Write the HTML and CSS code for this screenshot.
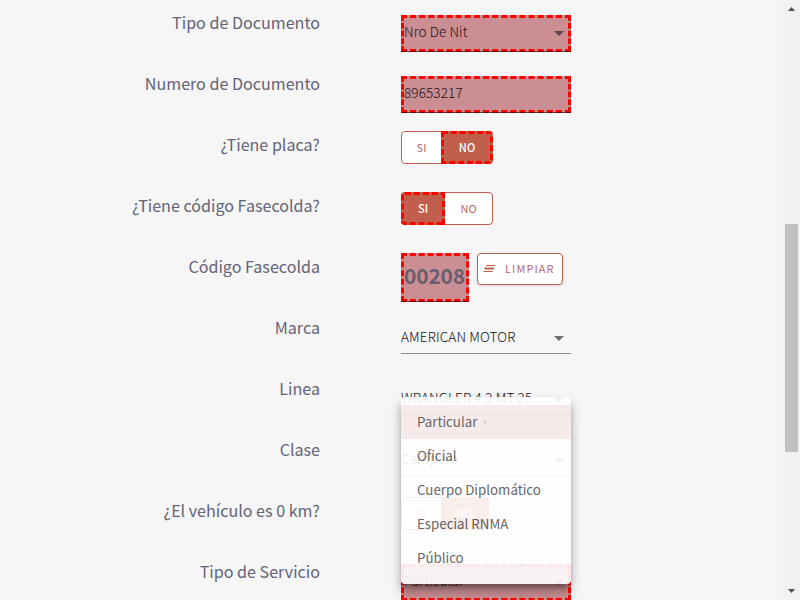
FILE: index.html
```html
<!DOCTYPE html>
<html lang="es">
<head>
<meta charset="utf-8">
<title>Datos del vehículo</title>
<link rel="stylesheet" href="styles.css">
</head>
<body>
<main class="form">
  <div class="row"><label>Tipo de Documento</label><div class="control"><div class="field marked"><span>Nro De Nit</span><i class="arrow"></i></div></div></div>
  <div class="row"><label>Numero de Documento</label><div class="control"><div class="field marked"><span>89653217</span></div></div></div>
  <div class="row"><label>¿Tiene placa?</label><div class="control toggle-control"><div class="toggle"><span class="option yes">SI</span><span class="option no selected marked-option">NO</span></div></div></div>
  <div class="row"><label>¿Tiene código Fasecolda?</label><div class="control toggle-control"><div class="toggle"><span class="option yes selected marked-option wide">SI</span><span class="option no">NO</span></div></div></div>
  <div class="row"><label>Código Fasecolda</label><div class="control toggle-control"><div class="code">00208</div><button class="clear"><svg width="14" height="10" viewBox="0 0 14 10"><path d="M3 1.500h9M.5 7.500h9"/><path class="middle" d="M1.500 4.500h9.500"/></svg><span>LIMPIAR</span></button></div></div>
  <div class="row"><label>Marca</label><div class="control"><div class="field"><span>AMERICAN MOTOR</span><i class="arrow"></i></div></div></div>
  <div class="row"><label>Linea</label><div class="control"><div class="field"><span>WRANGLER 4.2 MT 25…</span><i class="arrow"></i></div></div></div>
  <div class="row"><label>Clase</label><div class="control"><div class="field"><span>Campero</span><i class="arrow"></i></div></div></div>
  <div class="row"><label>¿El vehículo es 0 km?</label><div class="control toggle-control"><div class="toggle narrow"><span class="option yes">SI</span><span class="option no selected">NO</span></div></div></div>
  <div class="row"><label>Tipo de Servicio</label><div class="control"><div class="field marked"><span>Particular</span><i class="arrow"></i></div></div></div>
  <div class="menu">
    <div class="item active"><span>Particular</span><i class="dot"></i></div>
    <div class="item"><span>Oficial</span></div>
    <div class="item"><span>Cuerpo Diplomático</span></div>
    <div class="item"><span>Especial RNMA</span></div>
    <div class="item"><span>Público</span></div>
  </div>
</main>
<aside class="scrollbar">
  <svg width="17" height="17" viewBox="0 0 17 17"><path d="M5 11h7L8.500 7z"/></svg>
  <div class="thumb"></div>
  <svg width="17" height="17" viewBox="0 0 17 17"><path d="M5 6h7L8.500 10z"/></svg>
</aside>
</body>
</html>
```
FILE: styles.css
```css
* { box-sizing: border-box; }
body {
  margin: 0;
  width: 800px;
  height: 600px;
  overflow: hidden;
  display: flex;
  background: #f6f6f6;
  font-family: "Noto Sans CJK SC", "Noto Sans", sans-serif;
}
.form { position: relative; flex: 1; height: 600px; overflow: hidden; }
.row { display: grid; grid-template-columns: 320px 170px; column-gap: 81px; height: 61px; }
.row label {
  padding-top: 8px;
  text-align: right;
  white-space: nowrap;
  font-size: 16.100px;
  line-height: 29px;
  color: #646377;
}
.control { padding-top: 15px; }
.toggle-control { padding-top: 9px; display: flex; align-items: flex-start; gap: 8px; }
.field {
  display: flex;
  align-items: center;
  justify-content: space-between;
  width: 170px;
  height: 34px;
  padding: 0 7px 0 0;
  border-bottom: 1px solid #8c8c8c;
  font-size: 13.500px;
  font-weight: 300;
  letter-spacing: .120px;
  line-height: 20px;
  white-space: nowrap;
  color: #101014;
}
.field span { padding-bottom: 1px; }
.marked {
  position: relative;
  height: 37px;
  padding: 0 4px 3px 0;
  border: 3px dashed #f00;
  background: #cb8e92;
  color: #1b1218;
}
.marked span { padding-bottom: 1.500px; }
.marked::after, .code::after {
  content: "";
  position: absolute;
  left: -3px;
  right: -3px;
  bottom: -3px;
  height: 1px;
  background: #0008;
}
.arrow { width: 0; height: 0; border: 5px solid transparent; border-top-color: #707070; border-bottom: 0; margin-top: 3px; }
.marked .arrow { border-top-color: #5d464b; margin-top: 2px; }
.toggle { display: flex; width: 92px; height: 33px; border: 1px solid #c15f4c; border-radius: 4px; background: #fff; }
.narrow { width: 88px; }
.option { display: flex; align-items: center; justify-content: center; padding-bottom: 2px; font-size: 11px; color: #b9656c; }
.yes { width: 39px; }
.no { flex: 1; }
.selected { background: #c15f4c; color: #fff; font-weight: 500; }
.marked-option { border: 3px dashed #f00; margin: -1px -1px -1px 0; border-radius: 0 4px 4px 0; }
.wide { width: 44px; margin: -1px 0 -1px -1px; border-radius: 4px 0 0 4px; }
.code {
  position: relative;
  width: 68px;
  height: 49px;
  border: 3px dashed #f00;
  background: #cb8e92;
  color: #68606f;
  font-size: 21px;
  font-weight: 700;
  letter-spacing: -.200px;
  line-height: 39px;
}
.clear {
  display: flex;
  align-items: center;
  width: 86px;
  height: 32px;
  padding: 0 0 0 5px;
  gap: 8px;
  border: 1px solid #c15f4c;
  border-radius: 4px;
  background: #fff;
  box-shadow: 0 1px 3px #0002;
  font: 11px "Noto Sans CJK SC", sans-serif;
  letter-spacing: 1.100px;
  color: #b9656c;
}
.clear span { padding-bottom: 2px; }
.clear path { stroke: #c15f4c; stroke-width: 1; fill: none; }
.clear .middle { stroke-width: 2; }
.menu {
  position: absolute;
  left: 401px;
  top: 397px;
  width: 170px;
  height: 187px;
  padding: 8px 0;
  border-radius: 4px;
  background: #fff;
  box-shadow: 0 5px 6px -3px #0006, 0 7px 12px #0005;
  opacity: .9;
}
.item { display: flex; align-items: center; height: 34.200px; padding-left: 16px; font-size: 13.300px; color: #565656; }
.item span { padding-bottom: 2px; }
.active { background: #f8e9e9; }
.dot { width: 4px; height: 4px; margin-left: 6px; border-radius: 50%; background: #e0cfcf; }
.scrollbar { width: 17px; height: 600px; display: flex; flex-direction: column; background: #f1f1f1; }
.scrollbar path { fill: #505050; }
.thumb { width: 13px; height: 228px; margin: 207px 2px 131px; background: #c1c1c1; }
```
